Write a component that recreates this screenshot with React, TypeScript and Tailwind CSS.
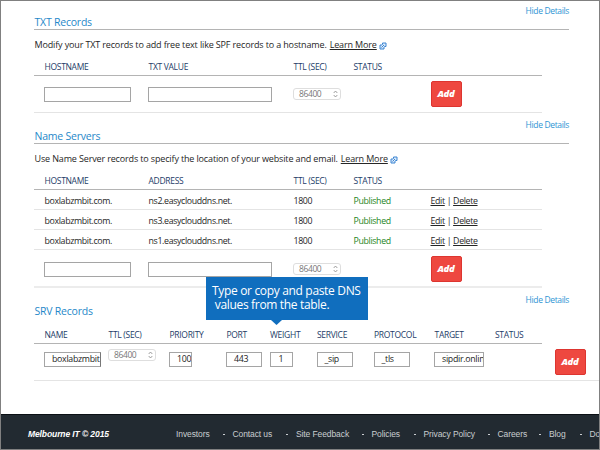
import React from 'react';

const tableCols = 'grid grid-cols-[104px_145px_60px_77.5px_1fr] pl-[10px] w-[508px]';
const srvCols =
  'grid grid-cols-[64px_61px_57px_43.5px_47px_57px_60.5px_60.5px_60px_1fr] pl-[10px]';

function ExternalIcon() {
  return (
    <svg className="ml-[2px] mt-[2px] h-[8px] w-[8px] shrink-0" viewBox="0 0 16 16" fill="none" stroke="#3a84d2" strokeWidth="2">
      <path d="M6 6H2v8h8v-4" fill="#d9e9fa" />
      <path d="M7 2h7v7h-3L7 5z" fill="#d9e9fa" />
      <path d="M5 11l5-5" />
    </svg>
  );
}

function SectionTop({ title }: { title: string }) {
  return (
    <>
      <h2 className="pl-[0.500px] text-[10.5px] leading-[14px] tracking-[-0.22px] text-[#1f88c9]">{title}</h2>
      <a className="mb-[13px] text-[8.500px] leading-[10px] tracking-[-0.35px] text-[#2f95d4]">Hide Details</a>
    </>
  );
}

function Description({ children }: { children: React.ReactNode }) {
  return (
    <div className="flex h-[29px] items-center whitespace-nowrap pl-[0.500px] text-[9px] tracking-[-0.145px] text-[#262626]">
      <span>{children}</span>
      <a className="ml-[3px] underline underline-offset-[1px]">Learn More</a>
      <ExternalIcon />
    </div>
  );
}

function Headings({ labels, cols }: { labels: string[]; cols: string }) {
  return (
    <div className={`${cols} h-[16px] items-center whitespace-nowrap text-[8.500px] leading-[16px] tracking-[-0.3px] text-[#1d3c68]`}>
      {labels.map((l) => (
        <span key={l} className="pl-[0.500px]">{l}</span>
      ))}
    </div>
  );
}

function Field({ value = '', className }: { value?: string; className: string }) {
  return (
    <div className={`h-[15px] overflow-hidden whitespace-nowrap border border-[#a5a5a5] bg-white text-[8.800px] leading-[13px] tracking-[-0.3px] text-[#1c1c1c] ${className}`}>
      {value}
    </div>
  );
}

function Ttl() {
  return (
    <div className="flex h-[12px] w-[48px] items-center justify-between rounded-[3px] border border-[#dedede] bg-white pl-[5px] pr-[2px] text-[8.500px] leading-[10px] tracking-[-0.4px] text-[#777]">
      <span>86400</span>
      <svg className="h-[8px] w-[5px]" viewBox="0 0 5 8" fill="none" stroke="#888" strokeWidth="0.8">
        <path d="M0.700 3L2.500 1l1.800 2M0.700 5l1.800 2 1.800-2" />
      </svg>
    </div>
  );
}

function AddButton() {
  return (
    <button className="flex h-[26px] w-[31px] items-center justify-center rounded-[2px] border border-[#dd3530] bg-[#ee4840] font-['Open_Sans',sans-serif] text-[9.500px] font-extrabold italic tracking-[-0.3px] text-white">
      Add
    </button>
  );
}

function EntryRow({ className = '' }: { className?: string }) {
  return (
    <div className={`${tableCols} h-[36px] items-center ${className}`}>
      <Field className="w-[87px]" />
      <Field className="w-[124px]" />
      <Ttl />
      <span />
      <AddButton />
    </div>
  );
}

const servers = ['ns2', 'ns3', 'ns1'];

const footerLinks = [
  { label: 'Investors', width: 'w-[56.5px]' },
  { label: 'Contact us', width: 'w-[63.5px]' },
  { label: 'Site Feedback', width: 'w-[75.5px]' },
  { label: 'Policies', width: 'w-[52px]' },
  { label: 'Privacy Policy', width: 'w-[74px]' },
  { label: 'Careers', width: 'w-[51.5px]' },
  { label: 'Blog', width: 'w-[40.5px]' },
  { label: 'Do', width: 'w-[60px]' },
];

export default function App() {
  return (
    <div className="relative flex h-[450px] w-[600px] flex-col overflow-hidden border border-[#808080] bg-white font-['Open_Sans',sans-serif]">
      <main className="flex h-[413px] shrink-0 flex-col pl-[33px]">
        <section>
          <div className="flex h-[29px] w-[535px] items-end justify-between border-b border-[#b4b4b4]">
            <SectionTop title="TXT Records" />
          </div>
          <Description>Modify your TXT records to add free text like SPF records to a hostname.</Description>
          <Headings cols={tableCols} labels={['HOSTNAME', 'TXT VALUE', 'TTL (SEC)', 'STATUS']} />
          <div className="w-[508px] border-y border-t-[#b4b4b4] border-b-[#e4e4e4]">
            <EntryRow />
          </div>
        </section>

        <section>
          <div className="flex h-[31px] w-[535px] items-end justify-between border-b border-[#b4b4b4]">
            <SectionTop title="Name Servers" />
          </div>
          <Description>Use Name Server records to specify the location of your website and email.</Description>
          <Headings cols={tableCols} labels={['HOSTNAME', 'ADDRESS', 'TTL (SEC)', 'STATUS']} />
          <div className="w-[508px] border-t border-[#b4b4b4]">
            {servers.map((s) => (
              <div key={s} className={`${tableCols} h-[20px] items-center whitespace-nowrap border-b border-[#e4e4e4] text-[8.800px] leading-[15px] tracking-[-0.35px] text-[#262626]`}>
                <span className="pl-[0.500px] pt-[3px]">boxlabzmbit.com.</span>
                <span className="pl-[0.500px] pt-[3px]">{s}.easyclouddns.net.</span>
                <span className="pl-[0.500px] pt-[3px]">1800</span>
                <span className="pl-[0.500px] pt-[3px] text-[#1d851d]">Published</span>
                <span className="pt-[3px]">
                  <a className="underline underline-offset-[1px]">Edit</a> | <a className="underline underline-offset-[1px]">Delete</a>
                </span>
              </div>
            ))}
          </div>
          <div className="w-[508px] border-b-2 border-[#ececec]">
            <EntryRow className="pt-[2px]" />
          </div>
        </section>

        <section>
          <div className="flex h-[30px] w-[535px] items-end justify-between">
            <SectionTop title="SRV Records" />
          </div>
          <div className="h-[9px]" />
          <Headings
            cols={srvCols}
            labels={['NAME', 'TTL (SEC)', 'PRIORITY', 'PORT', 'WEIGHT', 'SERVICE', 'PROTOCOL', 'TARGET', 'STATUS']}
          />
          <div className="w-[508px] border-t border-[#b4b4b4]" />
          <div className={`${srvCols} h-[37px] items-start border-b border-[#e4e4e4] pt-[5px]`}>
            <Field value="boxlabzmbit" className="mt-[3px] w-[57px] border-r-[#777] pl-[7px]" />
            <Ttl />
            <Field value="100" className="mt-[3px] w-[23px] pl-[7px]" />
            <Field value="443" className="mt-[3px] w-[36px] pl-[7px]" />
            <Field value="1" className="mt-[3px] w-[23px] pl-[8px]" />
            <Field value="_sip" className="mt-[3px] w-[36px] pl-[7px]" />
            <Field value="_tls" className="mt-[3px] w-[36px] pl-[7px]" />
            <Field value="sipdir.onlin" className="mt-[3px] w-[50px] pl-[7px]" />
            <span />
            <AddButton />
          </div>
        </section>
      </main>

      <footer className="flex h-[35px] shrink-0 items-center border-t border-[#0b1015] bg-[#222a31] pl-[27px] pt-[5px] font-['Liberation_Sans',Arial,sans-serif] text-[8.500px] tracking-[-0.1px] text-[#c9cdd0]">
        <strong className="w-[148px] shrink-0 whitespace-nowrap italic text-white">Melbourne IT © 2015</strong>
        {footerLinks.map((l) => (
          <div key={l.label} className={`flex shrink-0 items-center justify-between whitespace-nowrap pr-[8px] ${l.width}`}>
            <a>{l.label}</a>
            <i className="h-px w-[2px] bg-[#c9cdd0]" />
          </div>
        ))}
      </footer>

      <div className="absolute left-[205px] top-[276px] h-[43px] w-[162px] whitespace-pre bg-[#106ebe] pl-[6px] pt-[7px] text-[12px] leading-[14px] tracking-[-0.33px] text-white">
        {'Type or copy and paste DNS\n values from the table.'}
        <svg className="absolute left-[65px] top-[43px] h-[5px] w-[11px]" viewBox="0 0 11 5">
          <path d="M0 0h11L5.500 5z" fill="#106ebe" />
        </svg>
      </div>
    </div>
  );
}
